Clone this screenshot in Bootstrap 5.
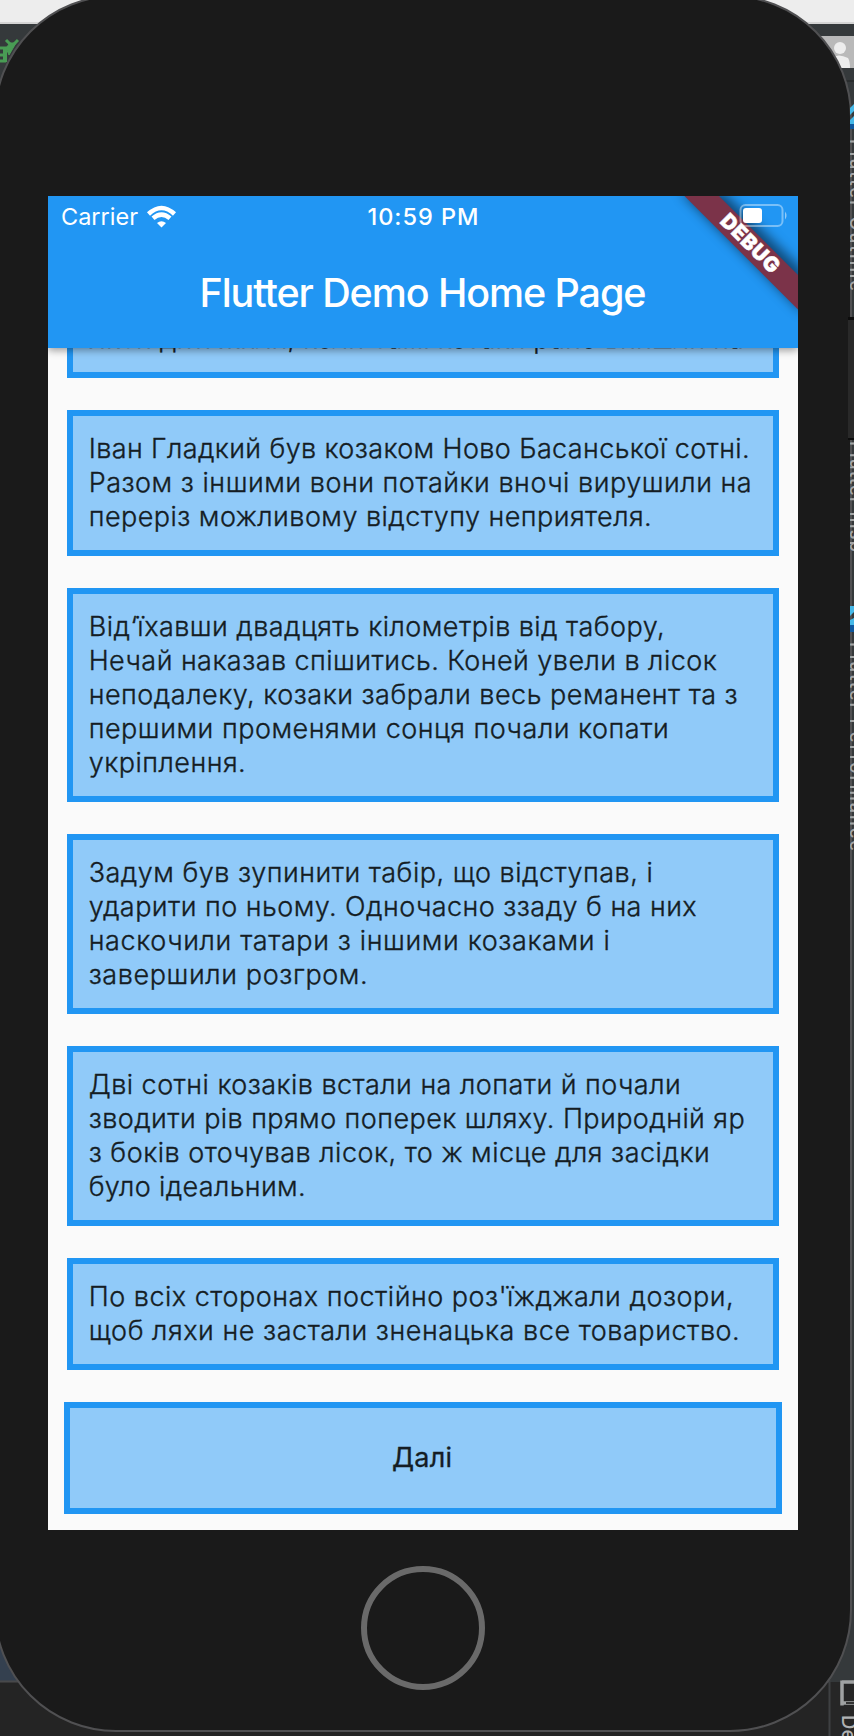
<!DOCTYPE html>
<html lang="uk">
<head>
<meta charset="utf-8">
<meta name="viewport" content="width=device-width, initial-scale=1">
<title>Flutter Demo Home Page</title>
<link href="https://cdn.jsdelivr.net/npm/bootstrap@5.3.0/dist/css/bootstrap.min.css" rel="stylesheet">
<style>
body{margin:0;width:854px;height:1736px;overflow:hidden;background:#262626;font-family:Inter,"Liberation Sans",sans-serif}
.desk{width:854px;height:1736px;overflow:hidden}
.backdrop{left:0;top:0}
.phone{left:-6px;top:-5px;width:858px;height:1737px;padding:199px 50px 0 52px;background:#1a1a1a;border:2px solid #505052;border-radius:122px}
.screen{width:750px;height:1334px;background:#fafafa;overflow:hidden}
.topbar{height:152px;background:#2196f3;color:#fff;box-shadow:0 2px 8px rgba(0,0,0,.42);z-index:2}
.status{height:42px;font-size:23.500px;line-height:42px}
.carrier{margin-left:13px}
.clock{left:0;right:0;font-weight:500}
.apptitle{font-size:39.500px;line-height:46px;padding-top:32px;font-weight:500}
.ribbon{right:0;top:0;width:120px;height:120px;overflow:visible}
.feed{margin-top:-48px;padding:0 18.700px;gap:32px}
.passage{background:#90caf9;border:6px solid #2196f3;padding:16px;line-height:34px;font-size:27px;font-weight:300;-webkit-text-stroke:.35px #151d24;color:#151d24}
.ln{display:table;white-space:nowrap;height:34px}
.next{height:112px;margin:32px 16px 0;border:6px solid #2196f3;border-radius:0;background:#90caf9;width:718px;font-size:27px;font-weight:400;-webkit-text-stroke:.3px #151d24;color:#151d24}
.next>span{margin-left:-2px}
.homekey{width:124px;height:124px;border:6px solid #6a6a6a;margin:36px 0 0 313px}
</style>
</head>
<body>
<div class="desk position-relative">
<svg class="backdrop position-absolute" width="854" height="1736" font-family="Inter,sans-serif">
<rect width="854" height="24" fill="#ededed"/><rect y="24" width="854" height="1658" fill="#35393b"/>
<rect y="22" width="854" height="2" fill="#d4d4d4"/>
<g stroke="#499c54" stroke-width="3" fill="none"><path d="M0 48H8M0 55H7M0 61H6M6 40L12 46L18 40"/><path d="M5 48V62" stroke-width="4"/><path d="M6 48L10 43H16L9 55Z" fill="#499c54" stroke-width="1"/></g>
<path d="M820 36H854V68H830Z" fill="#b9b9b9"/><circle cx="840" cy="48" r="6" fill="#ededed"/><path d="M832 68V58Q838 53 848 58Q850 61 850 68Z" fill="#ededed"/>
<path d="M836 81H854" stroke="#2a2d2e" stroke-width="2"/>
<rect y="1640" width="40" height="41" fill="#34404f"/><path d="M0 1681.500H829" stroke="#48494b" stroke-width="2"/>
<rect y="1683" width="829" height="53" fill="#242424"/>
<path d="M829.500 1680V1736" stroke="#3e4042" stroke-width="2"/>
<path d="M842 1682H854M842 1703H854M842 1680.500V1705.500" stroke="#a0a2a3" stroke-width="3.500" fill="none"/><rect x="846" y="1702" width="8" height="2" fill="#333"/>
<text transform="translate(841.500 1715) rotate(90)" font-size="20" font-weight="500" fill="#b0b2b3">De</text>
</svg>
<div class="phone position-absolute">
<main class="screen position-relative">
<header class="topbar position-relative">
<div class="status d-flex align-items-center position-relative">
<span class="carrier"><span data-w="77">Carrier</span></span>
<svg class="ms-2" width="32" height="24" viewBox="0 0 32 24" fill="none" stroke="#fff"><path d="M2.500 9Q15.500-3 28.500 9" stroke-width="4.500"/><path d="M7 13.300Q15.500 6 24 13.300" stroke-width="4.500"/><path d="M11 18Q15.500 14.500 20 18L15.500 22.500Z" fill="#fff" stroke="none"/></svg>
<span class="clock position-absolute text-center"><span data-w="111">10:59 PM</span></span>
</div>
<h1 class="apptitle text-center m-0"><span data-w="447">Flutter Demo Home Page</span></h1>
<svg class="ribbon position-absolute" viewBox="0 0 120 120">
<defs><filter id="soft" x="-30%" y="-30%" width="160%" height="160%"><feGaussianBlur stdDeviation="6"/></filter><clipPath id="edge"><path d="M-40 0H120V160H-40Z"/></clipPath></defs>
<g clip-path="url(#edge)"><path d="M2-4H45L126 75V118Z" fill="#000" opacity=".5" filter="url(#soft)"/><path d="M6.500 0H41L120 79V113.500Z" fill="#7b3349"/></g>
<rect x="62.500" y="9" width="42" height="21" rx="5" fill="none" stroke="#fff" stroke-opacity=".4" stroke-width="2"/><rect x="65" y="12" width="19" height="15" rx="3" fill="#fff"/><path d="M107 15.500Q110 19.500 107 23.500Z" fill="#fff" fill-opacity=".5"/>
<text transform="translate(72.500 47) rotate(45)" x="0" y="7.500" text-anchor="middle" font-size="20.500" font-weight="900" fill="#fff" stroke="#fff" stroke-width=".5" textLength="74">DEBUG</text>
</svg>
</header>
<section class="feed d-flex flex-column">
<p class="passage m-0"><span class="ln" data-w="655">Якби діти жили, коли самі козаки рано вийшли на</span></p>
<p class="passage m-0"><span class="ln" data-w="661">Іван Гладкий був козаком Ново Басанської сотні.</span><span class="ln" data-w="663">Разом з іншими вони потайки вночі вирушили на</span><span class="ln" data-w="563">переріз можливому відступу неприятеля.</span></p>
<p class="passage m-0"><span class="ln" data-w="576">Від‘їхавши двадцять кілометрів від табору,</span><span class="ln" data-w="628">Нечай наказав спішитись. Коней увели в лісок</span><span class="ln" data-w="649">неподалеку, козаки забрали весь реманент та з</span><span class="ln" data-w="580">першими променями сонця почали копати</span><span class="ln" data-w="157">укріплення.</span></p>
<p class="passage m-0"><span class="ln" data-w="564">Задум був зупинити табір, що відступав, і</span><span class="ln" data-w="608">ударити по ньому. Одночасно ззаду б на них</span><span class="ln" data-w="521">наскочили татари з іншими козаками і</span><span class="ln" data-w="279">завершили розгром.</span></p>
<p class="passage m-0"><span class="ln" data-w="592">Дві сотні козаків встали на лопати й почали</span><span class="ln" data-w="656">зводити рів прямо поперек шляху. Природній яр</span><span class="ln" data-w="621">з боків оточував лісок, то ж місце для засідки</span><span class="ln" data-w="217">було ідеальним.</span></p>
<p class="passage m-0"><span class="ln" data-w="645">По всіх сторонах постійно роз'їжджали дозори,</span><span class="ln" data-w="651">щоб ляхи не застали зненацька все товариство.</span></p>
</section>
<button class="next btn p-0" type="button"><span data-w="60">Далі</span></button>
</main>
<div class="homekey rounded-circle"></div>
</div>
<svg class="backdrop position-absolute" width="854" height="1736" font-family="Inter,sans-serif">
<defs><clipPath id="sliver"><rect x="850" y="90" width="4" height="800"/></clipPath></defs>
<rect x="848" y="317" width="6" height="123" fill="#0c0c0c"/><rect x="848" y="320" width="6" height="118" fill="#292929"/>
<g clip-path="url(#sliver)" fill="#a5a5a5" font-size="18" font-weight="500">
<path d="M850 108L854 104V111L850 115ZM850 120L854 116V124L850 124Z" fill="#45b8e8"/><rect x="850" y="124" width="4" height="5" fill="#0f579d"/>
<path d="M850 606H854V612L850 616ZM850 620L854 618V625H850Z" fill="#45b8e8"/><rect x="850" y="625" width="4" height="7" fill="#0f579d"/>
<text transform="translate(850 139) rotate(90)" textLength="152">Flutter Outline</text>
<text transform="translate(850 441) rotate(90)" textLength="111">Flutter Insp</text>
<text transform="translate(850 642) rotate(90)" textLength="209">Flutter Performance</text></g>
</svg>
</div>
<script>
// Tracks each line of text to the column width stored with it.
document.querySelectorAll('[data-w]').forEach(function(el){
  var n=el.textContent.length, gap=(el.dataset.w-el.getBoundingClientRect().width)/(n-1);
  el.style.letterSpacing=gap.toFixed(3)+'px';
  el.style.marginRight=(-gap).toFixed(3)+'px';
});
</script>
<script src="https://cdn.jsdelivr.net/npm/bootstrap@5.3.0/dist/js/bootstrap.bundle.min.js"></script>
</body>
</html>
